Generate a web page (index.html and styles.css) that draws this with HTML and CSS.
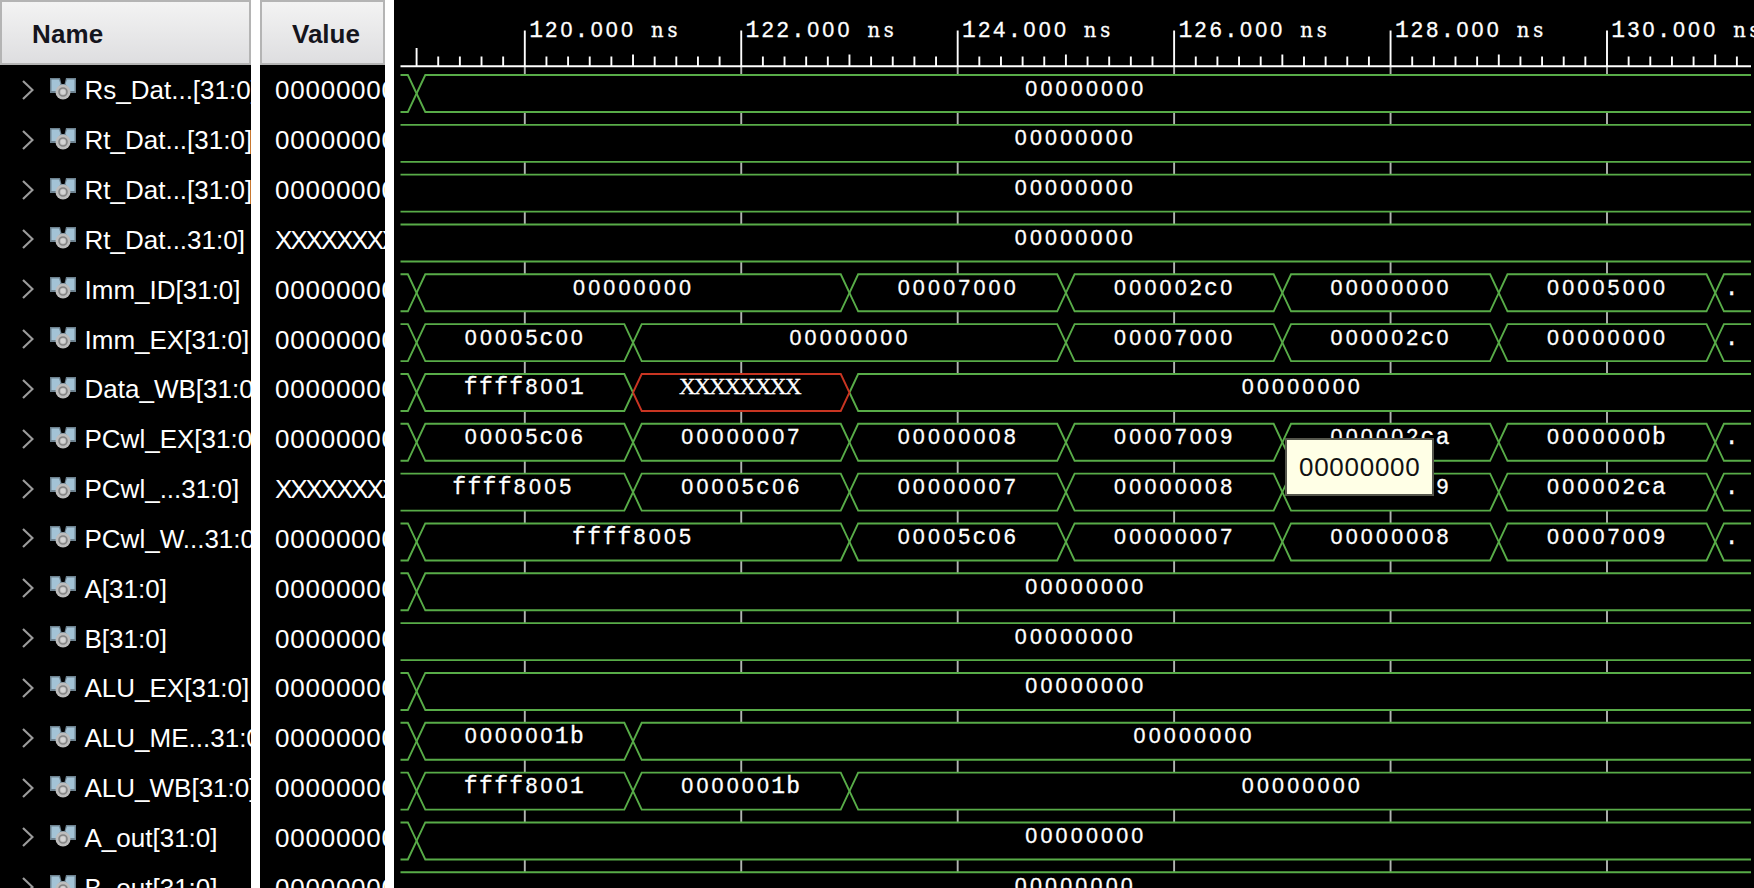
FILE: index.html
```html
<!DOCTYPE html>
<html lang="en">
<head>
<meta charset="utf-8">
<title>Waveform viewer</title>
<link rel="stylesheet" href="styles.css">
</head>
<body>
<svg class="defs" width="0" height="0">
  <symbol id="bus" viewBox="0 0 26 22">
    <path d="M0 0H10L11.500 6H14.500L16 0H26V15H0Z" fill="#6d8290"/>
    <path d="M1.500 1.500H9L10.500 6L6 13H1.500ZM17 1.500H24.500V13H20L15.500 6Z" fill="#a3c3d6"/>
    <circle cx="13" cy="14" r="7.500" fill="#bdbdbd"/>
    <circle cx="13" cy="14" r="4" fill="none" stroke="#858585" stroke-width="1.600"/>
    <circle cx="13" cy="14" r="2.400" fill="#d4d4d4"/>
  </symbol>
</svg>
<main class="viewer">
  <section class="panel names">
    <header class="head">Name</header>
    <div class="rows" id="names"></div>
  </section>
  <section class="panel values">
    <header class="head">Value</header>
    <div class="rows" id="values"></div>
  </section>
  <section class="wave">
    <svg id="wave" width="1360" height="888" viewBox="394 0 1360 888"></svg>
    <div class="tip">00000000</div>
  </section>
</main>
<script src="wave.js"></script>
</body>
</html>
```
FILE: styles.css
```css
* { box-sizing: border-box; }
body {
  margin: 0;
  background: #fff;
  font-family: "Liberation Sans", Arial, sans-serif;
  overflow: hidden;
}
.defs { display: block; height: 0; }
.viewer {
  display: grid;
  grid-template-columns: 251px 125px 1360px;
  column-gap: 9px;
  height: 888px;
  overflow: hidden;
}
.panel {
  background: #000;
  overflow: hidden;
  height: 888px;
}
.head {
  height: 65px;
  border: 2px solid #b4b4b4;
  background: linear-gradient(#f3f3f3, #dedee0);
  font-weight: bold;
  font-size: 26px;
  line-height: 64px;
  color: #15151d;
  padding-left: 30px;
}
.names .head { letter-spacing: 0.1px; }
.row {
  display: flex;
  align-items: center;
  height: 49.83px;
  color: #fff;
  font-size: 26px;
  white-space: pre;
}
.row span { position: relative; top: 1px; }
.names .row { padding-left: 22px; }
.values .row { padding-left: 15px; letter-spacing: 0.76px; }
.values .row.unknown { letter-spacing: -2.1px; }
.chevron { width: 12px; height: 20px; flex: none; }
.bus { width: 26px; height: 22px; flex: none; margin: 0 8.5px 0 16px; position: relative; top: -1px; }
.wave {
  position: relative;
  background: #000;
  height: 888px;
}
.wave svg { display: block; }
.bus-line { fill: none; stroke: #58ac48; stroke-width: 1.9; }
.bus-line.bad { stroke: #c93522; }
.grid { stroke: #b2b5b2; stroke-width: 1.9; }
.tick { stroke: #fff; stroke-width: 1.9; }
.label { fill: #fff; font-family: "Liberation Mono", monospace; font-size: 23px; stroke: #fff; stroke-width: 0.3; }
.label .digit { font-family: "Liberation Sans", Arial, sans-serif; font-size: 21.500px; }
.label .wide { font-family: "Liberation Serif", serif; font-size: 23px; }
.label .slab { font-family: "DejaVu Serif", serif; font-size: 19.500px; }
.tip {
  position: absolute;
  left: 891px;
  top: 438px;
  width: 149px;
  height: 58px;
  background: #ffffe6;
  border: 2px solid #55564c;
  color: #111;
  font-size: 26px;
  letter-spacing: 0.72px;
  line-height: 55px;
  padding-left: 12px;
}
```
FILE: wave.js
```js
const PITCH = 49.83, TOP = 75, BOX = 37, LEFT = 400.5, RIGHT = 1751;
const timeX = t => 524.8 + (t - 120) * 108.22;
const CHAR = 15.15;

// name, value, first edge time (null: none), segments as [text, end time]
const Z = '00000000';
const signals = [
  ['Rs_Dat...[31:0]', Z, 119, [[Z]]],
  ['Rt_Dat...[31:0]', Z, null, [[Z]]],
  ['Rt_Dat...[31:0]', Z, null, [[Z]]],
  ['Rt_Dat...31:0]', 'XXXXXXXX', null, [[Z]]],
  ['Imm_ID[31:0]', Z, 119, [[Z, 123], ['00007000', 125], ['000002c0', 127], [Z, 129], ['00005000', 131], ['.']]],
  ['Imm_EX[31:0]', Z, 119, [['00005c00', 121], [Z, 125], ['00007000', 127], ['000002c0', 129], [Z, 131], ['.']]],
  ['Data_WB[31:0]', Z, 119, [['ffff8001', 121], ['XXXXXXXX', 123], [Z]]],
  ['PCwl_EX[31:0]', Z, 119, [['00005c06', 121], ['00000007', 123], ['00000008', 125], ['00007009', 127], ['000002ca', 129], ['0000000b', 131], ['.']]],
  ['PCwl_...31:0]', 'XXXXXXXX', null, [['ffff8005', 121], ['00005c06', 123], ['00000007', 125], ['00000008', 127], ['00007009', 129], ['000002ca', 131], ['.']]],
  ['PCwl_W...31:0]', Z, 119, [['ffff8005', 123], ['00005c06', 125], ['00000007', 127], ['00000008', 129], ['00007009', 131], ['.']]],
  ['A[31:0]', Z, 119, [[Z]]],
  ['B[31:0]', Z, null, [[Z]]],
  ['ALU_EX[31:0]', Z, 119, [[Z]]],
  ['ALU_ME...31:0]', Z, 119, [['0000001b', 121], [Z]]],
  ['ALU_WB[31:0]', Z, 119, [['ffff8001', 121], ['0000001b', 123], [Z]]],
  ['A_out[31:0]', Z, 119, [[Z]]],
  ['B_out[31:0]', Z, null, [[Z]]],
];

// Fixed-pitch label: each character is centred in its own cell.
function label(text, x, y) {
  const runs = text.match(/[02-9]+|X+|[ns]+|[^02-9Xns]+/g);
  let i = 0, out = '';
  for (const run of runs) {
    const cls = /[02-9]/.test(run) ? 'digit' : /X/.test(run) ? 'wide' : /[ns]/.test(run) ? 'slab' : 'mono';
    const xs = [...run].map(() => (x + (i++ + 0.5) * CHAR).toFixed(2)).join(' ');
    out += `<tspan class="${cls}" x="${xs}">${run}</tspan>`;
  }
  return `<text class="label" text-anchor="middle" xml:space="preserve" y="${y}">${out}</text>`;
}

let svg = '';
const line = (cls, x, y1, y2) => `<line class="${cls}" x1="${x}" x2="${x}" y1="${y1}" y2="${y2}"/>`;

for (let i = 0; i <= 63; i++) {
  const x = timeX(119 + i * 0.2);
  if (x > RIGHT) break;
  const major = (i - 5) % 10 === 0, half = i % 10 === 0;
  svg += line('tick', x, major ? 30.5 : i === 0 ? 48 : half ? 54.5 : 56.5, 66);
  if (major) {
    svg += label(`${119 + i / 5}.000 ns`, x + 3.7, 37);
    svg += line('grid', x, 67, TOP);
    signals.forEach((s, r) => {
      const y = TOP + r * PITCH + BOX;
      svg += line('grid', x, y, y + PITCH - BOX);
    });
  }
}
svg += `<path class="tick" d="M${LEFT} 66.300H${RIGHT}"/>`;

signals.forEach(([name, value, edge, segs], r) => {
  const t = TOP + r * PITCH, b = t + BOX, m = (t + b) / 2, W = 8.7;
  let x = LEFT, bad = '';
  if (edge !== null) {
    x = timeX(edge);
    svg += `<path class="bus-line" d="M${LEFT} ${t}H${x - W}L${x} ${m}L${x - W} ${b}H${LEFT}"/>`;
  }
  segs.forEach(([text, end], k) => {
    const x2 = end ? timeX(end) : RIGHT;
    const open = !k && edge === null;
    const start = open ? `M${x} ${t}` : `M${x} ${m}L${x + W} ${t}`;
    const right = end ? `H${x2 - W}L${x2} ${m}L${x2 - W} ${b}` : `H${x2}M${x2} ${b}`;
    const close = open ? `H${x}` : `H${x + W}L${x} ${m}`;
    const d = `<path class="bus-line${text[0] === 'X' ? ' bad' : ''}" d="${start}${right}${close}"/>`;
    if (text[0] === 'X') bad = d; else svg += d;
    const nudge = open ? (end ? 4.5 : 2) : end ? 1 : -0.5;
    const lx = text === '.' ? 1724 : (x + x2) / 2 - text.length * CHAR / 2 - nudge;
    svg += label(text, lx, t + 20.5);
    x = x2;
  });
  svg += bad;
});
document.getElementById('wave').innerHTML = svg;

document.getElementById('names').innerHTML = signals.map(s =>
  `<div class="row"><svg class="chevron" viewBox="0 0 12 20"><path d="M1 1L10.500 10L1 19" fill="none" stroke="#9b9b9b" stroke-width="2.200"/></svg><svg class="bus"><use href="#bus"/></svg><span>${s[0]}</span></div>`).join('');
document.getElementById('values').innerHTML = signals.map(s =>
  `<div class="row${s[1][0] === 'X' ? ' unknown' : ''}"><span>${s[1]}</span></div>`).join('');
```
